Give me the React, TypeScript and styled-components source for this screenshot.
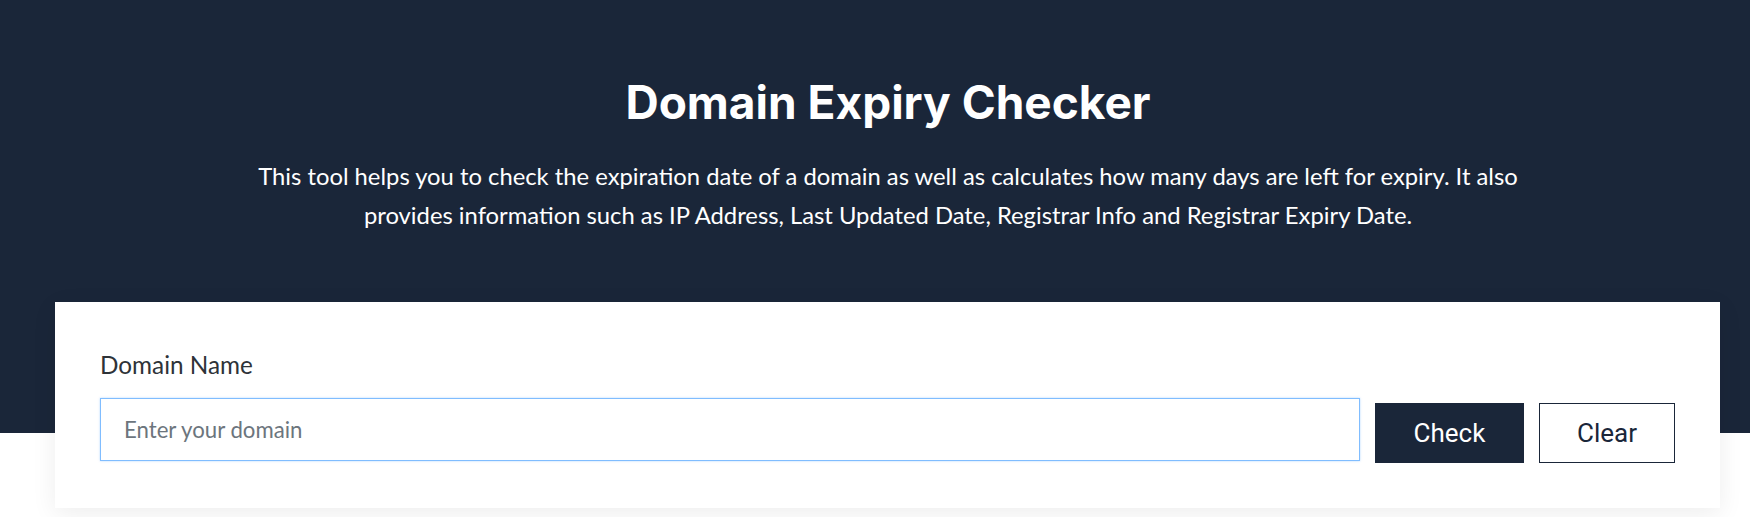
import React from 'react';
import styled, {createGlobalStyle} from "styled-components";

const GlobalStyle = createGlobalStyle`
  html, body {
    margin: 0;
    padding: 0;
    background: #ffffff;
  }
  body {
    font-family: Lato, "Open Sans", sans-serif;
  }
  * {
    box-sizing: border-box;
  }
`

const Page = styled.div`
  width: 100%;
  min-height: 517px;
  background: #ffffff;
  overflow: hidden;
`

const Hero = styled.section`
  background: #1a2639;
  padding: 75px 0 198px 26px;
  text-align: center;
  color: #ffffff;
`

const Title = styled.h1`
  margin: 0;
  font-family: Inter, Lato, sans-serif;
  font-weight: 700;
  font-size: 46px;
  line-height: 55px;
`

const Description = styled.p`
  margin: 27px auto 0;
  max-width: 1300px;
  font-family: Lato, sans-serif;
  font-weight: 400;
  font-size: 23.8px;
  line-height: 39px;
`

const Card = styled.div`
  position: relative;
  margin: -131px 30px 0 55px;
  background: #ffffff;
  padding: 49px 45px 45px;
  box-shadow: 0 6px 24px rgba(0, 0, 0, 0.07);
`

const Label = styled.label`
  display: block;
  margin-bottom: 19px;
  font-family: Lato, sans-serif;
  font-size: 24.3px;
  line-height: 28px;
  color: #2e3338;
`

const Row = styled.div`
  display: flex;
  align-items: flex-start;
  gap: 15px;
`

const Input = styled.input`
  flex: 1;
  height: 63px;
  padding: 0 23px;
  border: 1px solid #80bdff;
  box-shadow: 0 0 2px rgba(128, 189, 255, 0.6);
  outline: none;
  font-family: Lato, sans-serif;
  font-size: 22.2px;
  color: #2e3338;
  background: #ffffff;

  &::placeholder {
    color: #6c757d;
  }
`

const Button = styled.button<{ $variant: 'solid' | 'outline' }>`
  margin-top: 5px;
  height: 60px;
  width: ${({$variant}) => $variant === 'solid' ? '149px' : '136px'};
  border: 1px solid #1a2639;
  background: ${({$variant}) => $variant === 'solid' ? '#1a2639' : '#ffffff'};
  color: ${({$variant}) => $variant === 'solid' ? '#ffffff' : '#1a2639'};
  font-family: Roboto, "Liberation Sans", Arial, sans-serif;
  font-size: 26px;
  cursor: pointer;
`

function App() {
    return (
        <Page>
            <GlobalStyle/>
            <Hero>
                <Title>Domain Expiry Checker</Title>
                <Description>
                    This tool helps you to check the expiration date of a domain as well as calculates how many days are
                    left for expiry. It also provides information such as IP Address, Last Updated Date, Registrar Info
                    and Registrar Expiry Date.
                </Description>
            </Hero>
            <Card>
                <Label htmlFor="domain">Domain Name</Label>
                <Row>
                    <Input id="domain" placeholder="Enter your domain"/>
                    <Button $variant="solid">Check</Button>
                    <Button $variant="outline">Clear</Button>
                </Row>
            </Card>
        </Page>
    );
}

export default App;
